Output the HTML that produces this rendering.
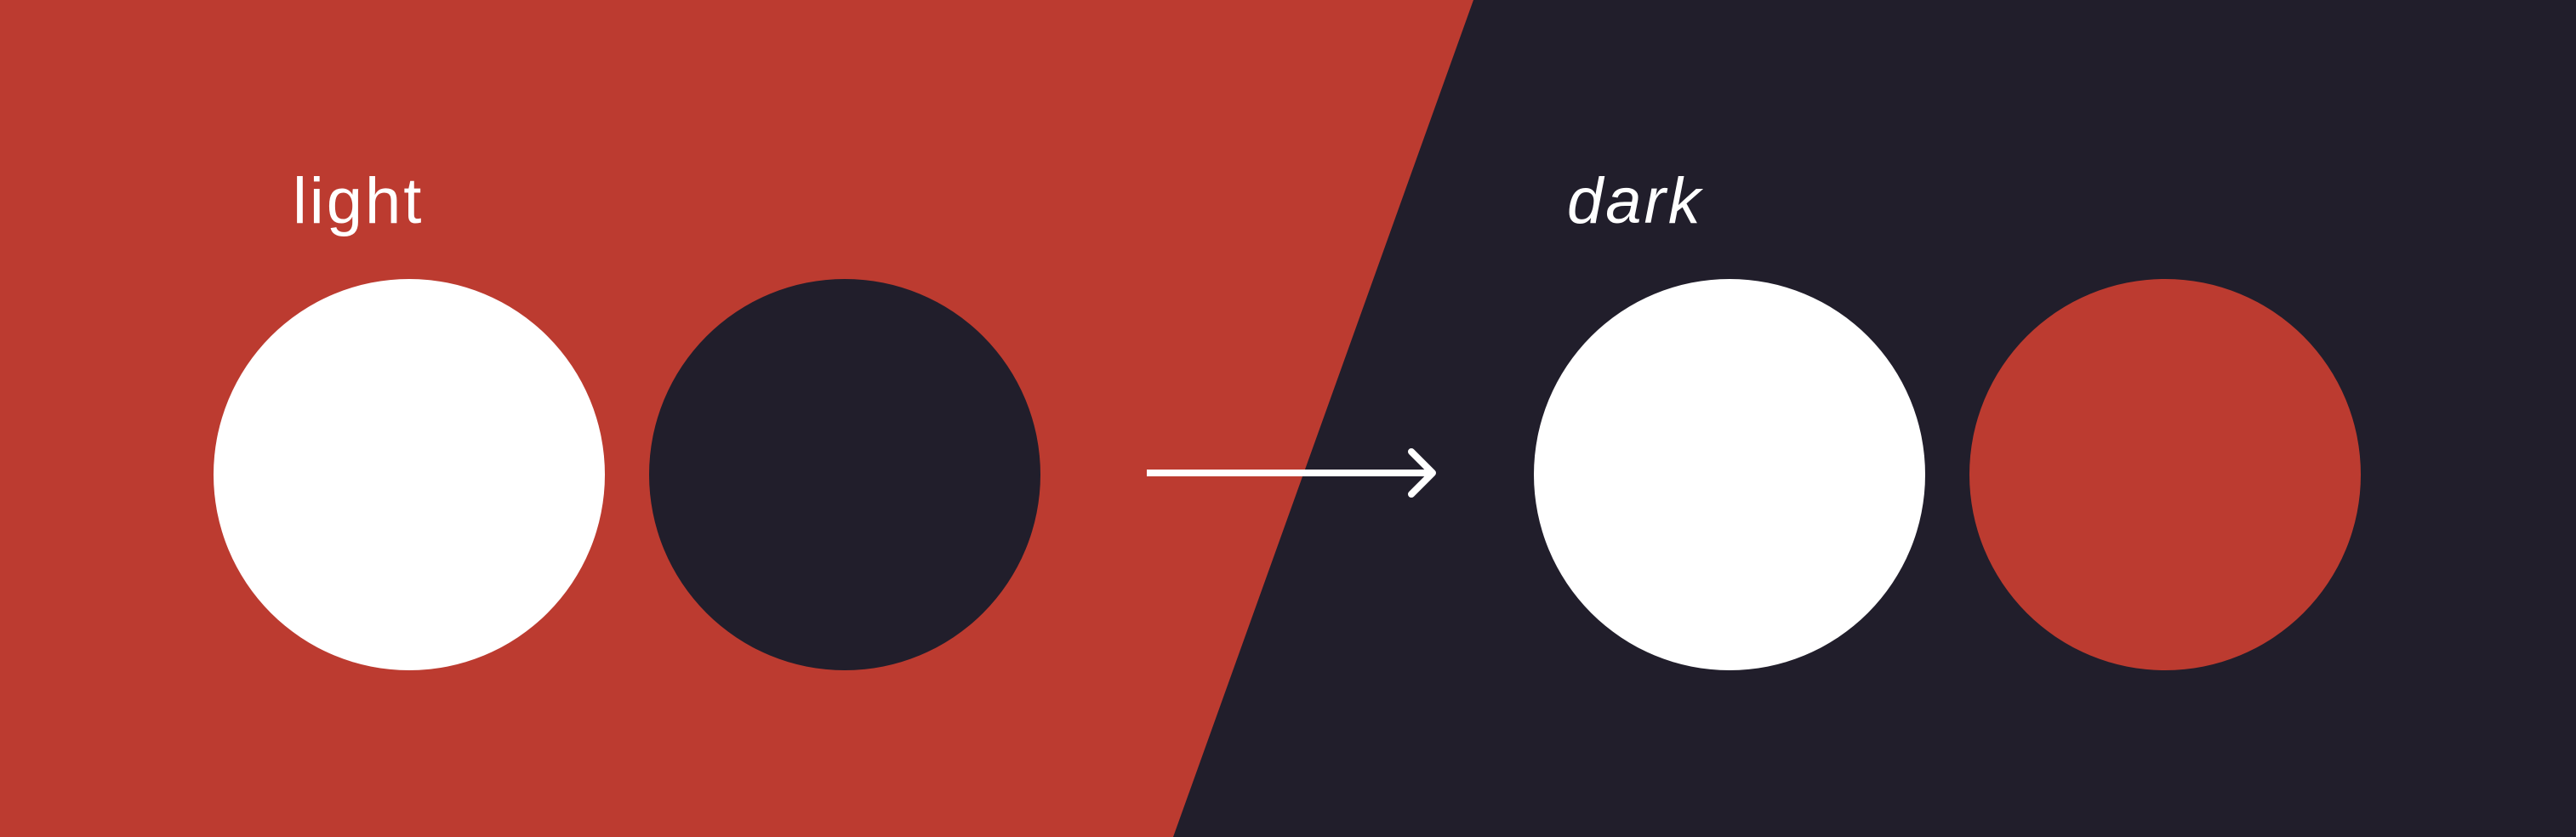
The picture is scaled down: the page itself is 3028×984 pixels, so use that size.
<!DOCTYPE html>
<html><head><style>
html,body{margin:0;padding:0;}
body{width:3028px;height:984px;overflow:hidden;background:#211e2b;position:relative;font-family:"Liberation Sans",sans-serif;}
.t{position:absolute;color:#fff;font-size:76px;line-height:1;letter-spacing:3px;}
</style></head><body>
<svg width="3028" height="984" style="position:absolute;left:0;top:0">
<polygon points="0,0 1732,0 1379,984 0,984" fill="#bc3b30"/>
<circle cx="481" cy="558" r="230" fill="#fff"/>
<circle cx="993" cy="558" r="230" fill="#211e2b"/>
<circle cx="2033" cy="558" r="230" fill="#fff"/>
<circle cx="2545" cy="558" r="230" fill="#bc3b30"/>
<line x1="1348" y1="556" x2="1684" y2="556" stroke="#fff" stroke-width="8"/>
<polyline points="1659,531 1684,556 1659,581" fill="none" stroke="#fff" stroke-width="8" stroke-linecap="round" stroke-linejoin="round"/>
</svg>
<div class="t" style="left:344px;top:199px;">light</div>
<div class="t" style="left:1842px;top:199px;font-style:italic;">dark</div>
</body></html>
